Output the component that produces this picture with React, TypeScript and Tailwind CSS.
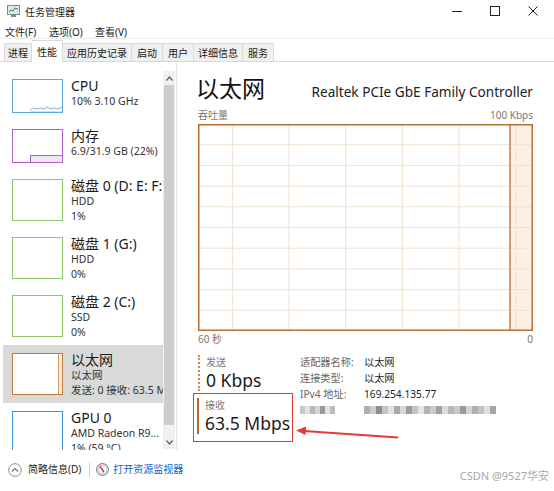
import React from 'react'

type SideItem = {
  title: string
  lines: string[]
  color: string
  kind: 'cpu' | 'mem' | 'disk' | 'eth' | 'gpu'
  selected?: boolean
}

const items: SideItem[] = [
  { title: 'CPU', lines: ['10% 3.10 GHz'], color: '#5ea8d8', kind: 'cpu' },
  { title: '内存', lines: ['6.9/31.9 GB (22%)'], color: '#ae5fcb', kind: 'mem' },
  { title: '磁盘 0 (D: E: F:)', lines: ['HDD', '1%'], color: '#8cc86a', kind: 'disk' },
  { title: '磁盘 1 (G:)', lines: ['HDD', '0%'], color: '#8cc86a', kind: 'disk' },
  { title: '磁盘 2 (C:)', lines: ['SSD', '0%'], color: '#8cc86a', kind: 'disk' },
  { title: '以太网', lines: ['以太网', '发送: 0 接收: 63.5 Mbps'], color: '#c27a3e', kind: 'eth', selected: true },
  { title: 'GPU 0', lines: ['AMD Radeon R9...', '1% (59 °C)'], color: '#3f93d4', kind: 'gpu' },
]

const tabs = [
  { name: '进程', pad: 'px-[3px]' },
  { name: '性能', pad: 'px-[5px]' },
  { name: '应用历史记录', pad: 'px-[4px]' },
  { name: '启动', pad: 'px-[5px]' },
  { name: '用户', pad: 'px-[5px]' },
  { name: '详细信息', pad: 'px-[4px]' },
  { name: '服务', pad: 'px-[5px]' },
]

function Thumb({ item }: { item: SideItem }) {
  const h = item.lines.length > 1 ? 42 : 34
  return (
    <div className="relative shrink-0 w-[51px] bg-white" style={{ height: h, border: `1px solid ${item.color}` }}>
      {item.kind === 'cpu' && (
        <svg className="absolute left-0 bottom-0" width="49" height="8" viewBox="0 0 49 8">
          <polyline points="17,6 20,4 24,5 28,4 31,5 34,3 38,5 41,4 45,5 49,3" fill="none" stroke="#7ab8e0" strokeWidth="1" />
          <line x1="17" y1="7.5" x2="49" y2="7.5" stroke="#cfe4f3" />
        </svg>
      )}
      {item.kind === 'mem' && (
        <div className="absolute left-[17px] right-0 bottom-0 h-[7px] bg-[#efe6f3] border-t border-l border-[#ae5fcb]" />
      )}
      {item.kind === 'eth' && (
        <div className="absolute right-0 top-0 bottom-0 w-[4px] bg-[#fbece0] border-l border-[#d59a68]" />
      )}
    </div>
  )
}

function Sidebar() {
  return (
    <div className="w-[177px] shrink-0 flex pt-[9px] border-r border-[#e6e6e6]">
      <div className="w-[160px] ml-[3px] overflow-hidden flex flex-col">
        {items.map(item => (
          <div
            key={item.title}
            className={`flex items-start gap-[8px] pl-[9px] pt-[8px] shrink-0 ${item.lines.length > 1 ? 'h-[58px]' : 'h-[50px]'} ${item.selected ? 'bg-[#d9d9d9]' : ''}`}
          >
            <Thumb item={item} />
            <div className="-mt-[1px] whitespace-nowrap">
              <div className="text-[14px] leading-[16px] text-[#1a1a1a]">{item.title}</div>
              {item.lines.map(l => (
                <div key={l} className="text-[10.5px] leading-[14.5px] text-[#333]">{l}</div>
              ))}
            </div>
          </div>
        ))}
      </div>
      <div className="w-[12px] h-[378px] flex flex-col bg-[#f0f0f0]">
        <div className="h-[14px] flex items-center justify-center">
          <svg width="7" height="5" viewBox="0 0 7 5"><polyline points="0.5,4.5 3.5,1 6.5,4.5" fill="none" stroke="#606060" strokeWidth="1.2" /></svg>
        </div>
        <div className="h-[340px] mx-[1px] bg-[#cdcdcd]" />
        <div className="flex-1" />
        <div className="h-[14px] flex items-center justify-center">
          <svg width="7" height="5" viewBox="0 0 7 5"><polyline points="0.5,0.5 3.5,4 6.5,0.5" fill="none" stroke="#606060" strokeWidth="1.2" /></svg>
        </div>
      </div>
    </div>
  )
}

function Graph() {
  const hs = [1, 2, 3, 4, 5, 6, 7, 8, 9].map(i => i * 20.7)
  const vs = [34.4, 91, 147.7, 204.4, 261, 317.7]
  return (
    <svg width="335" height="207" viewBox="0 0 335 207" className="block">
      <rect x="0" y="0" width="335" height="207" fill="#fff" />
      <rect x="312" y="0" width="23" height="207" fill="#fbefe6" />
      {hs.map(y => <line key={y} x1="0" y1={y} x2="335" y2={y} stroke="#f2e0d1" strokeWidth="1" />)}
      {vs.map(x => <line key={x} x1={x} y1="0" x2={x} y2="207" stroke="#f2e0d1" strokeWidth="1" />)}
      <line x1="312" y1="0" x2="312" y2="207" stroke="#c98652" strokeWidth="1.6" />
      <rect x="0.75" y="0.75" width="333.5" height="205.5" fill="none" stroke="#bc6f32" strokeWidth="1.5" />
    </svg>
  )
}

function Blurred() {
  const a = ['#c8c8c8', '#e4e0da', '#b8b8b8', '#d6d6d6', '#9a9a9a', '#e4e4e4', '#bcbcbc']
  const b = ['#b0b0b0', '#d0ccc6', '#8c8c8c', '#c4c4c4', '#e2e2e2', '#a8a8a8', '#d8d8d8', '#9c9c9c', '#c0c4cc', '#e6e6e6', '#b4b4b4', '#cccccc', '#a0a0a0', '#dcdcdc', '#b8b8b8', '#c8c8c8', '#9a9a9a', '#d4d4d4', '#acb0b8', '#c2c2c2', '#e0e0e0', '#a4a4a4']
  return (
    <div className="flex items-center h-[16px] blur-[0.6px]">
      <div className="flex w-[64px]">
        {a.map((c, i) => <span key={i} className="block w-[5px] h-[8px]" style={{ background: c }} />)}
      </div>
      <div className="flex">
        {b.map((c, i) => <span key={i} className="block w-[6px] h-[8px]" style={{ background: c }} />)}
      </div>
    </div>
  )
}

function RightPanel() {
  return (
    <div className="flex-1 pl-[21px] pr-[21px] pt-[10px] relative">
      <div className="h-[32px] flex items-baseline justify-between">
        <div className="text-[23px] leading-[32px] text-[#111] -ml-[2px]">以太网</div>
        <div className="text-[13.6px] leading-[32px] text-[#222]">Realtek PCIe GbE Family Controller</div>
      </div>
      <div className="mt-[5px] flex justify-between text-[10px] leading-[12px] text-[#777]">
        <span>吞吐量</span>
        <span>100 Kbps</span>
      </div>
      <div className="mt-[3px]">
        <Graph />
      </div>
      <div className="mt-[2px] flex justify-between text-[10px] leading-[12px] text-[#777]">
        <span>60 秒</span>
        <span>0</span>
      </div>
      <div className="mt-[10px] flex gap-[7px]">
        <div className="w-[100px] -ml-[5px] shrink-0">
          <div className="ml-[5px] border-l-2 border-dotted border-[#d9874a] pl-[6px]">
            <div className="text-[10px] leading-[14px] text-[#777]">发送</div>
            <div className="text-[17.5px] leading-[22px] text-[#1a1a1a]">0 Kbps</div>
          </div>
          <div className="mt-[2px] border-[1.5px] border-[#e53935] pt-[4px] pb-[7px] pl-[3px]">
            <div className="border-l-2 border-[#b8692a] pl-[6px]">
              <div className="text-[10px] leading-[14px] text-[#777]">接收</div>
              <div className="text-[17.5px] leading-[22px] text-[#1a1a1a] whitespace-nowrap">63.5 Mbps</div>
            </div>
          </div>
        </div>
        <div className="text-[10.2px] leading-[16px] -mt-[1px]">
          <div className="flex"><span className="w-[64px] text-[#666]">适配器名称:</span><span className="text-[#222]">以太网</span></div>
          <div className="flex"><span className="w-[64px] text-[#666]">连接类型:</span><span className="text-[#222]">以太网</span></div>
          <div className="flex"><span className="w-[64px] text-[#666]">IPv4 地址:</span><span className="text-[#222]">169.254.135.77</span></div>
          <Blurred />
        </div>
      </div>
    </div>
  )
}

export default function App() {
  return (
    <div className="w-[554px] h-[491px] bg-white relative overflow-hidden font-['Noto_Sans','Noto_Sans_CJK_SC',sans-serif] text-[#1a1a1a] select-none">
      {/* title bar */}
      <div className="h-[22px] flex items-center">
        <svg className="ml-[7px]" width="13" height="12" viewBox="0 0 13 12">
          <rect x="0.5" y="0.5" width="12" height="9" fill="#dfe9f2" stroke="#7a8a99" />
          <polyline points="2,7 4,5 6,6 8,3 11,4" fill="none" stroke="#2f8f3a" strokeWidth="1" />
          <rect x="4" y="10" width="5" height="2" fill="#7a8a99" />
        </svg>
        <span className="ml-[5px] text-[10px] leading-[22px] pt-[2px]">任务管理器</span>
        <div className="ml-auto flex items-center h-full">
          <div className="w-[38px] flex justify-center">
            <svg width="10" height="10" viewBox="0 0 10 10"><line x1="0" y1="5.5" x2="10" y2="5.5" stroke="#222" /></svg>
          </div>
          <div className="w-[38px] flex justify-center">
            <svg width="10" height="10" viewBox="0 0 10 10"><rect x="0.5" y="0.5" width="9" height="9" fill="none" stroke="#222" /></svg>
          </div>
          <div className="w-[38px] mr-[2px] flex justify-center">
            <svg width="10" height="10" viewBox="0 0 10 10"><path d="M0.5 0.5 L9.5 9.5 M9.5 0.5 L0.5 9.5" stroke="#222" strokeWidth="1" /></svg>
          </div>
        </div>
      </div>
      {/* menu */}
      <div className="h-[17px] flex items-center pl-[5px] pt-[5px] text-[10px] border-b border-[#ececec]">
        <span className="w-[44px]">文件(F)</span>
        <span className="w-[46px]">选项(O)</span>
        <span>查看(V)</span>
      </div>
      {/* tabs */}
      <div className="h-[23px] flex items-end pl-[4px] border-b border-[#d9d9d9]">
        {tabs.map((t, i) => (
          t.name === '性能' ? (
            <div key={t.name} className={`h-[22px] -mb-[1px] ${t.pad} bg-white border border-b-0 border-l-0 border-[#d9d9d9] text-[10px] leading-[22px]`}>{t.name}</div>
          ) : (
            <div key={t.name} className={`h-[18px] ${t.pad} bg-[#f0f0f0] border border-b-0 ${i === 0 ? '' : 'border-l-0'} border-[#d9d9d9] text-[10px] leading-[18px]`}>{t.name}</div>
          )
        ))}
      </div>
      {/* main */}
      <div className="h-[388px] flex">
        <Sidebar />
        <RightPanel />
      </div>
      {/* footer */}
      <div className="h-[41px] pb-[2px] flex items-center pl-[8px] text-[10px]">
        <svg width="14" height="14" viewBox="0 0 14 14">
          <circle cx="7" cy="7" r="6.3" fill="none" stroke="#8a8a8a" strokeWidth="1" />
          <polyline points="4,8.5 7,5.5 10,8.5" fill="none" stroke="#6a6a6a" strokeWidth="1.1" />
        </svg>
        <span className="ml-[6px] text-[#222]">简略信息(D)</span>
        <div className="ml-[8px] w-px h-[14px] bg-[#cfcfcf]" />
        <svg className="ml-[6px]" width="13" height="13" viewBox="0 0 13 13">
          <circle cx="6.5" cy="6.5" r="6" fill="#e4e4e4" stroke="#7c7c7c" strokeWidth="1" />
          <circle cx="6.5" cy="6.5" r="4.2" fill="#f7f7f7" stroke="#b0b0b0" strokeWidth="0.6" />
          <line x1="3.8" y1="3.2" x2="8" y2="9" stroke="#d22" strokeWidth="1.3" />
        </svg>
        <span className="ml-[4px] text-[#0a66c8]">打开资源监视器</span>
      </div>
      {/* annotation arrow */}
      <svg className="absolute left-0 top-0 pointer-events-none" width="554" height="491" viewBox="0 0 554 491">
        <line x1="398" y1="437.5" x2="304" y2="431" stroke="#e53935" strokeWidth="2" />
        <polygon points="296,430.5 306,426.5 305.5,435" fill="#e53935" />
      </svg>
      <div className="absolute right-[5px] bottom-[7px] text-[11px] text-[#a8a8a8]">CSDN @9527华安</div>
    </div>
  )
}
